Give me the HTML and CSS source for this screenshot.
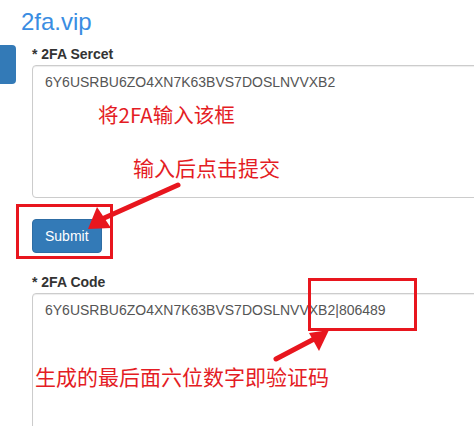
FILE: index.html
```html
<!DOCTYPE html>
<html lang="zh-CN">
<head>
<meta charset="utf-8">
<title>2fa.vip</title>
<link rel="stylesheet" href="styles.css">
</head>
<body>
<div class="page">
  <h1 class="brand">2fa.vip</h1>
  <div class="main">
    <span class="side-tab"></span>
    <form class="form">
      <div class="group">
        <label class="label">* 2FA Sercet</label>
        <textarea class="field field-secret">6Y6USRBU6ZO4XN7K63BVS7DOSLNVVXB2</textarea>
      </div>
      <button type="button" class="btn">Submit</button>
      <div class="group group-code">
        <label class="label">* 2FA Code</label>
        <textarea class="field field-code">6Y6USRBU6ZO4XN7K63BVS7DOSLNVVXB2|806489</textarea>
      </div>
    </form>
  </div>

  <svg class="marks" width="474" height="426" viewBox="0 0 474 426" xmlns="http://www.w3.org/2000/svg">
    <rect x="17.5" y="205.5" width="94" height="52" fill="none" stroke="#e8161e" stroke-width="3"/>
    <rect x="309.5" y="279.5" width="106" height="50" fill="none" stroke="#e8161e" stroke-width="3"/>
    <line x1="178" y1="185" x2="102" y2="219" stroke="#e8161e" stroke-width="5" stroke-linecap="round"/>
    <polygon points="88,229 97,207 111,228" fill="#e8161e"/>
    <line x1="276" y1="359" x2="316" y2="338" stroke="#e8161e" stroke-width="5" stroke-linecap="round"/>
    <polygon points="329,330 309,333 319,351" fill="#e8161e"/>
  </svg>
  <span class="note note-1">将2FA输入该框</span>
  <span class="note note-2">输入后点击提交</span>
  <span class="note note-3">生成的最后面六位数字即验证码</span>
</div>
</body>
</html>
```

FILE: styles.css
```css
html, body {
  margin: 0;
  padding: 0;
  background: #fff;
  overflow: hidden;
}

.page {
  position: relative;
  width: 474px;
  height: 426px;
  overflow: hidden;
  font-family: "Liberation Sans", Arial, sans-serif;
  color: #333;
}

.brand {
  margin: 8px 0 0 21px;
  font-size: 24px;
  line-height: 28px;
  font-weight: normal;
  color: #3a8de2;
}

.main {
  display: flex;
  align-items: flex-start;
  margin-top: 8px;
}

.side-tab {
  flex: none;
  width: 16px;
  height: 39px;
  margin-top: 1px;
  background: #337ab7;
  border-radius: 0 4px 4px 0;
}

.form {
  margin: 0 0 0 16px;
  flex: none;
}

.label {
  display: block;
  font-size: 14px;
  line-height: 20px;
  font-weight: bold;
  color: #333;
  margin-bottom: 1px;
}

.field {
  display: block;
  box-sizing: border-box;
  width: 480px;
  margin: 0;
  padding: 6px 12px;
  font-family: "Liberation Sans", Arial, sans-serif;
  font-size: 14px;
  line-height: 20px;
  color: #555;
  background: #fff;
  border: 1px solid #ccc;
  border-radius: 4px;
  box-shadow: inset 0 1px 1px rgba(0, 0, 0, 0.075);
  resize: none;
  overflow: hidden;
}

.field-secret {
  height: 133px;
}

.field-code {
  height: 160px;
}

.btn {
  display: block;
  margin-top: 21px;
  padding: 6px 12px;
  font-family: "Liberation Sans", Arial, sans-serif;
  font-size: 14px;
  line-height: 20px;
  color: #fff;
  background: #337ab7;
  border: 1px solid #2e6da4;
  border-radius: 4px;
}

.group-code {
  margin-top: 19px;
}

.marks {
  position: absolute;
  top: 0;
  left: 0;
  pointer-events: none;
}

.note {
  position: absolute;
  font-family: "Noto Sans CJK SC", "Microsoft YaHei", sans-serif;
  color: #e41c24;
  line-height: 1;
  white-space: nowrap;
}

.note-1 {
  left: 98px;
  top: 104px;
  font-size: 20.5px;
}

.note-2 {
  left: 133px;
  top: 157px;
  font-size: 21px;
}

.note-3 {
  left: 35px;
  top: 366px;
  font-size: 21px;
}
```
